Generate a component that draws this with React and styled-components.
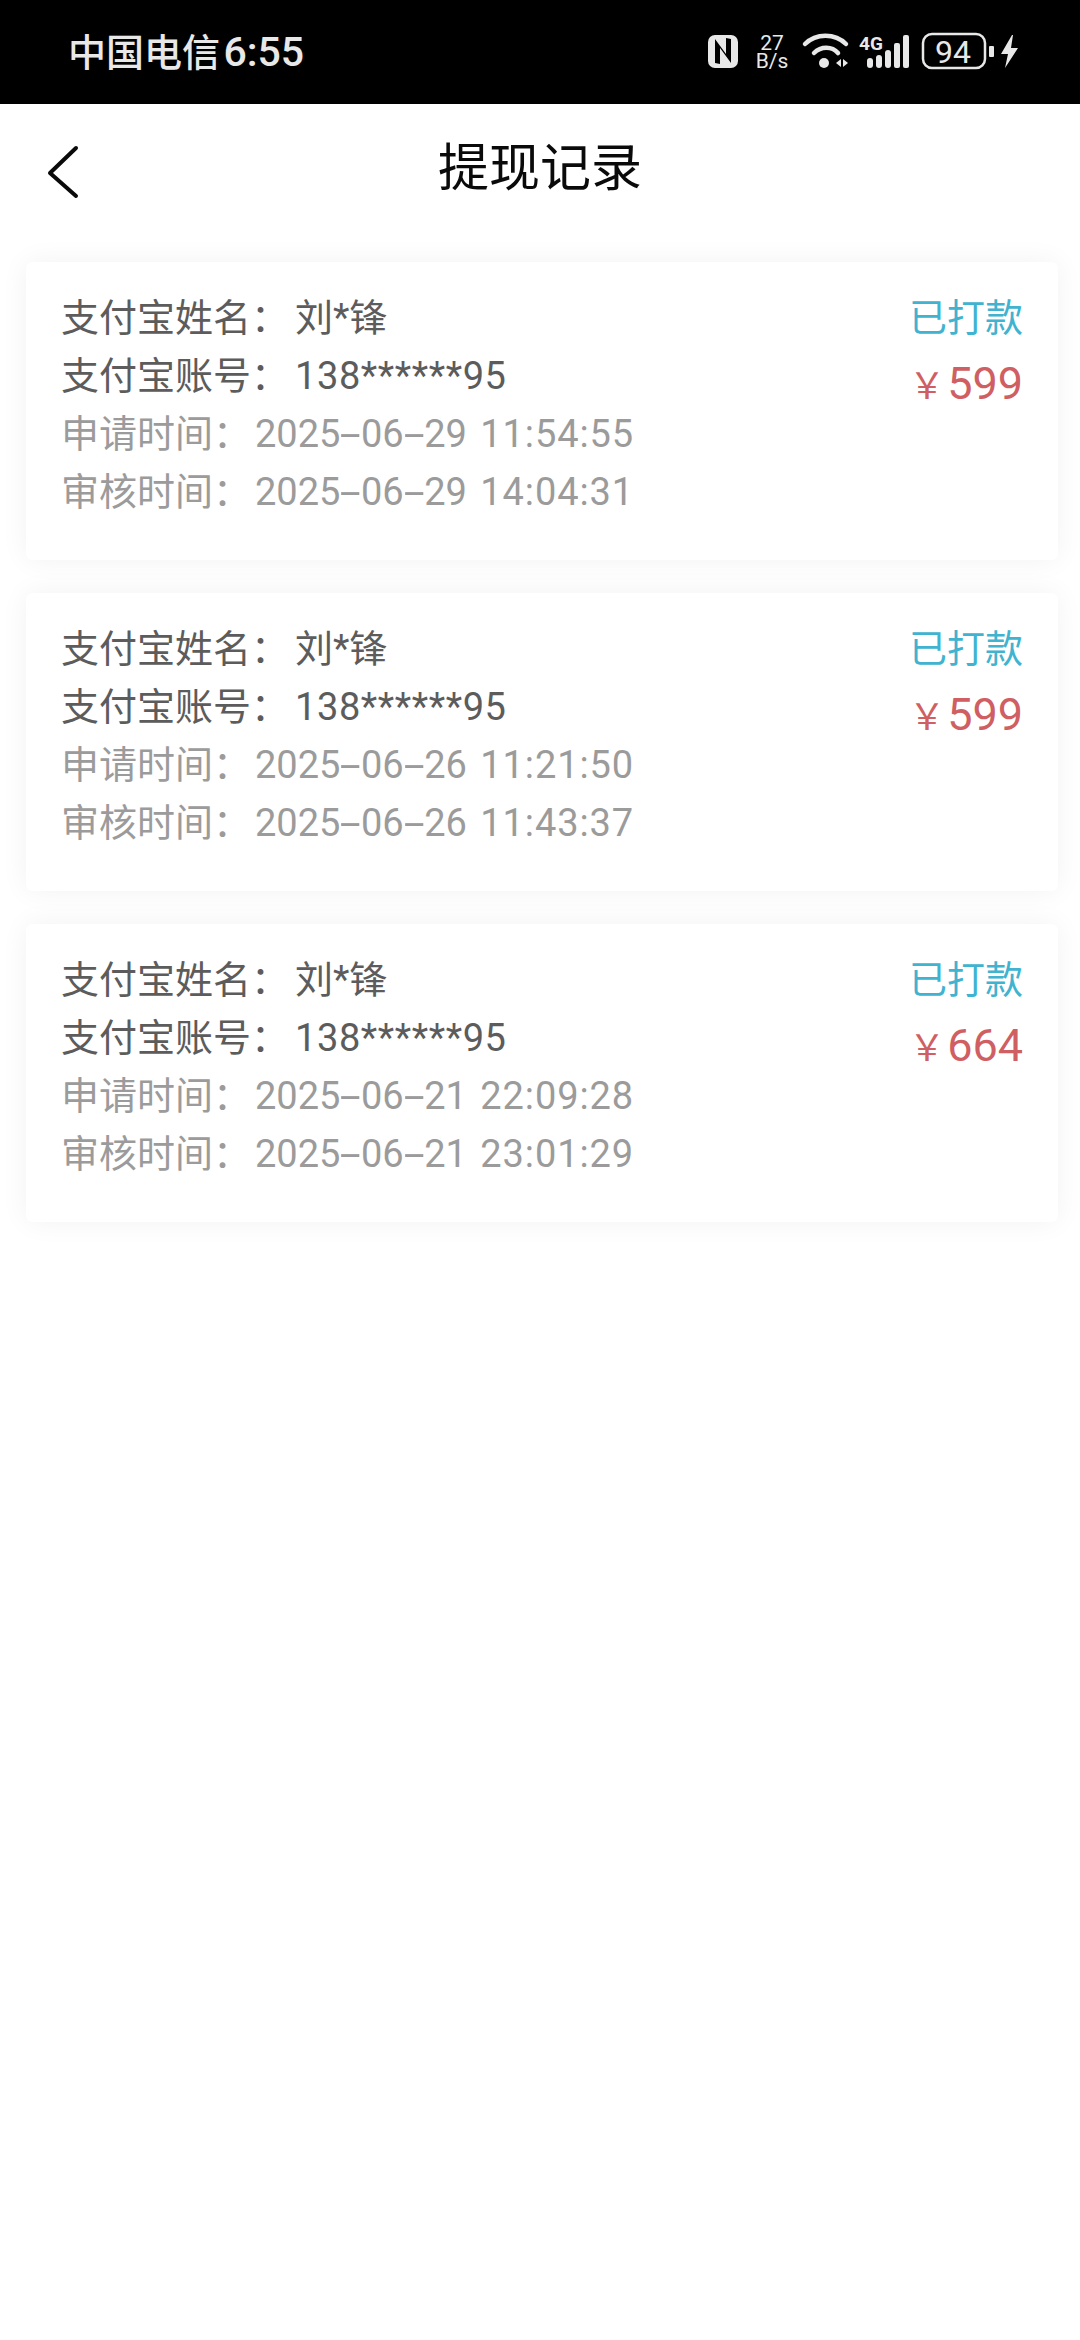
import styled, { createGlobalStyle } from 'styled-components';

const GlobalStyle = createGlobalStyle`
  html, body {
    margin: 0;
    padding: 0;
    background: #fff;
    font-family: Roboto, "Noto Sans CJK SC", sans-serif;
  }
`

const Page = styled.div`
  width: 1080px;
  height: 2340px;
  background: #fff;
  overflow: hidden;
`

const StatusBar = styled.div`
  height: 104px;
  background: #000;
  color: #e8e8e8;
  display: flex;
  align-items: center;
  justify-content: space-between;
  padding: 0 62px 0 68px;
  box-sizing: border-box;
`

const Carrier = styled.span`
  font-size: 38px;
  line-height: 48px;
  font-weight: 500;
`

const Clock = styled.span`
  font-size: 41px;
  font-weight: 500;
  margin-left: -6px;
`

const StatusIcons = styled.div`
  display: flex;
  align-items: center;
  height: 52px;
`

const Speed = styled.div`
  width: 34px;
  margin: 0 9px 0 17px;
  display: flex;
  flex-direction: column;
  align-items: center;
  font-size: 21px;
  line-height: 18px;
  white-space: nowrap;
`

const NavBar = styled.header`
  height: 88px;
  position: relative;
  display: flex;
  align-items: center;
  justify-content: center;
  margin-top: 21px;
`

const BackIcon = styled.svg`
  position: absolute;
  left: 46px;
  top: 20px;
`

const Title = styled.h1`
  margin: 0;
  font-size: 51px;
  font-weight: 400;
  color: #0a0a0a;
  line-height: 66px;
`

const List = styled.main`
  display: flex;
  flex-direction: column;
  gap: 33px;
  padding: 49px 22px 0 26px;
`

const Card = styled.section`
  height: 298px;
  background: #fff;
  border-radius: 6px;
  box-shadow: 0 0 28px rgba(0, 0, 0, 0.055);
  display: flex;
  justify-content: space-between;
  padding: 27px 35px 0 35px;
  box-sizing: border-box;
`

const Rows = styled.div`
  display: flex;
  flex-direction: column;
`

const Row = styled.div`
  height: 58.4px;
  line-height: 58.4px;
  font-size: 38px;
  white-space: nowrap;
  color: #5c5c5c;
`

const MutedRow = styled(Row)`
  color: #9b9b9b;
  position: relative;
  top: -1px;
`

const Label = styled.span`
  display: inline-block;
  width: ${p => p.$width}px;
`

const Masked = styled.span`
  letter-spacing: 0.6px;
`

const Dash = styled.span`
  display: inline-block;
  transform: scaleX(2);
  margin: 0 5px;
`

const TimePart = styled.span`
  margin-left: 4px;
  letter-spacing: 0.9px;
`

const Side = styled.div`
  display: flex;
  flex-direction: column;
  align-items: flex-end;
`

const Status = styled.div`
  font-size: 38px;
  line-height: 58px;
  color: #3fb3cf;
`

const Amount = styled.div`
  font-size: 45px;
  line-height: 70px;
  color: #cf5f62;
  margin-top: 2px;
`

const Yen = styled.span`
  font-size: 36px;
  margin-right: 2px;
`

const records = [
  { applied: '2025-06-29 11:54:55', reviewed: '2025-06-29 14:04:31', amount: 599 },
  { applied: '2025-06-26 11:21:50', reviewed: '2025-06-26 11:43:37', amount: 599 },
  { applied: '2025-06-21 22:09:28', reviewed: '2025-06-21 23:01:29', amount: 664 },
]

const DateTime = ({ value }) => {
  const [date, time] = value.split(' ')
  const [y, m, d] = date.split('-')
  return (
    <span>
      {y}<Dash>-</Dash>{m}<Dash>-</Dash>{d} <TimePart>{time}</TimePart>
    </span>
  )
}

const StatusGlyphs = () => (
  <StatusIcons>
    <svg width="30" height="52" viewBox="0 0 30 52" fill="#e8e8e8">
      <rect x="0" y="9" width="30" height="33" rx="7" />
      <path d="M7 14v23l5 1V22l11 15V13l-5-1v16L7 13z" fill="#000" />
    </svg>
    <Speed>
      <span>27</span>
      <span>B/s</span>
    </Speed>
    <svg width="220" height="52" viewBox="90 0 220 52" fill="#e8e8e8">
      <g fill="none" stroke="#e8e8e8" strokeWidth="4.500" strokeLinecap="round">
        <path d="M97 18c11-11 30-11 41 0" />
        <path d="M106 27c7-7 18-7 24 0" />
      </g>
      <circle cx="116" cy="37" r="5" />
      <path d="M133 33l-5 4 5 4zM135 33l5 4-5 4z" />
      <text x="151" y="24" fontSize="19" fontWeight="700" fontFamily="Roboto, sans-serif">4G</text>
      <rect x="159" y="32" width="6" height="10" rx="3" />
      <rect x="168" y="29" width="6" height="13" rx="3" />
      <rect x="177" y="24" width="6" height="18" rx="3" />
      <rect x="186" y="17" width="6" height="25" rx="2" />
      <rect x="195" y="9" width="6" height="33" rx="2" />
      <rect x="215" y="8" width="62" height="34" rx="9" fill="none" stroke="#e8e8e8" strokeWidth="2.500" />
      <text x="245" y="37" fontSize="32" fontFamily="Roboto, sans-serif" textAnchor="middle">94</text>
      <rect x="281" y="20" width="5" height="11" rx="1" />
      <path d="M304 9L293 28h7l-3 14 13-20h-7l2-13z" />
    </svg>
  </StatusIcons>
)

const App = () => {
  return (
    <Page>
      <GlobalStyle />
      <StatusBar>
        <Carrier>中国电信 <Clock>6:55</Clock></Carrier>
        <StatusGlyphs />
      </StatusBar>
      <NavBar>
        <BackIcon width="34" height="54" viewBox="0 0 34 54" fill="none" stroke="#0a0a0a" strokeWidth="4" strokeLinecap="round" strokeLinejoin="round">
          <path d="M30 3L4 28l26 23" />
        </BackIcon>
        <Title>提现记录</Title>
      </NavBar>
      <List>
        {records.map(r => (
          <Card key={r.applied}>
            <Rows>
              <Row><Label $width={234}>支付宝姓名：</Label>刘*锋</Row>
              <Row><Label $width={234}>支付宝账号：</Label><Masked>138******95</Masked></Row>
              <MutedRow><Label $width={194}>申请时间：</Label><DateTime value={r.applied} /></MutedRow>
              <MutedRow><Label $width={194}>审核时间：</Label><DateTime value={r.reviewed} /></MutedRow>
            </Rows>
            <Side>
              <Status>已打款</Status>
              <Amount><Yen>￥</Yen>{r.amount}</Amount>
            </Side>
          </Card>
        ))}
      </List>
    </Page>
  );
};

export default App;
